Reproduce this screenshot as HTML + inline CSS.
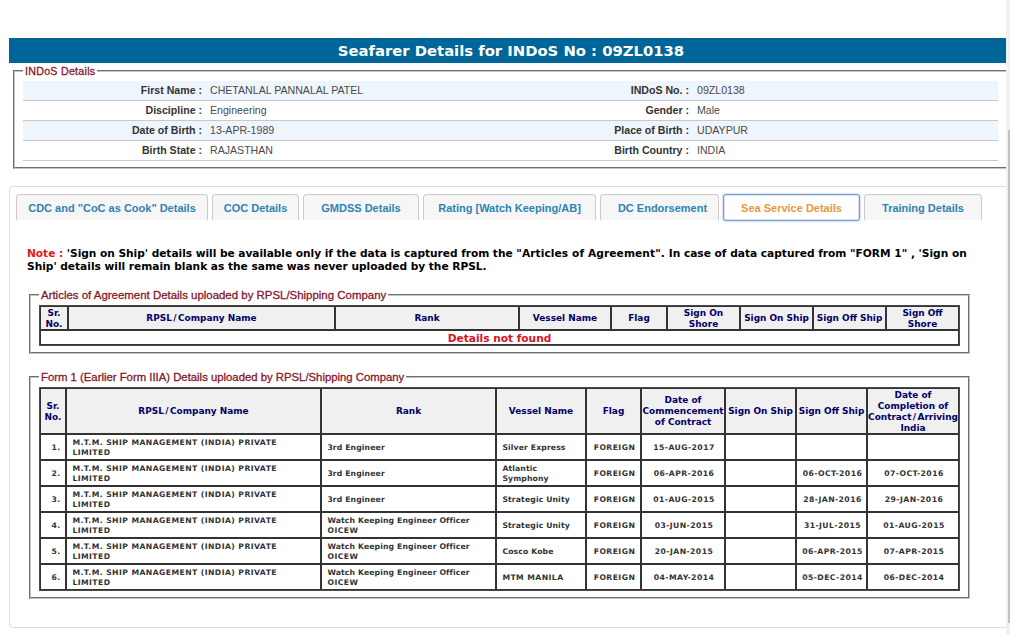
<!DOCTYPE html>
<html>
<head>
<meta charset="utf-8">
<title>Seafarer Details</title>
<style>
html,body{margin:0;padding:0;background:#fff;}
body{width:1010px;height:634px;overflow:hidden;position:relative;font-family:"Liberation Sans",sans-serif;}
.abs{position:absolute;}
.vb{font-family:"DejaVu Sans",sans-serif;font-weight:bold;}
#title{left:9px;top:38px;width:1004px;height:25px;background:#006699;color:#fff;text-align:center;font-size:14.8px;line-height:25px;}
/* groove frame */
.fs{position:absolute;box-sizing:border-box;border:1px solid;border-color:#6e6e6e #c4c4c4 #c4c4c4 #6e6e6e;}
.fs>i{position:absolute;left:0;top:0;right:0;bottom:0;border:1px solid;border-color:#c4c4c4 #6e6e6e #6e6e6e #c4c4c4;}
.lg{position:absolute;background:#fff;color:#84182b;-webkit-text-stroke:0.3px #84182b;white-space:nowrap;padding:0 2px;}
/* indos table */
#indos{left:23px;top:81px;width:975px;border-collapse:collapse;font-size:10.6px;}
#indos td{height:19px;padding:0;border-bottom:1px solid #c9c9c9;white-space:nowrap;line-height:19px;}
#indos tr.s td{background:#eef5fd;}
#indos td.l{text-align:right;font-weight:bold;color:#333;}
#indos td.v{color:#4a4a4a;padding-left:8px;}
/* tabs */
#tabs{left:9px;top:186px;width:1010px;height:440px;border:1px solid #ddd;border-radius:4px;}
.tab{position:absolute;top:194px;height:26px;box-sizing:border-box;border:1px solid #ccc;border-bottom:0;border-radius:4px 4px 0 0;background:#f6f6f6;color:#2e83b4;font-weight:bold;font-size:11px;line-height:27px;text-align:center;white-space:nowrap;}
.tab.act{height:27px;border:1px solid #7a9fd0;border-radius:3px;background:#fff;color:#e9983f;box-shadow:inset 0 0 0 1px #d6e1f0,0 0 2px #7a9fd0;}
/* data tables */
table.dt{position:absolute;border:1px solid #4a4a4a;border-spacing:0;border-collapse:separate;table-layout:fixed;}
table.dt th,table.dt td{border:1px solid #333;padding:0;overflow:hidden;}
table.dt th{background:#f0f0f0;color:#000066;font-size:8.95px;line-height:11px;text-align:center;font-family:"DejaVu Sans",sans-serif;font-weight:bold;}
table.dt td{color:#333;font-size:7.7px;letter-spacing:0.42px;line-height:10px;font-family:"DejaVu Sans",sans-serif;font-weight:bold;text-align:left;padding:3px 0 1px 5.4px;}
table.dt td.lc{letter-spacing:0.13px;}
table.dt td.s1{padding-top:3px;padding-bottom:1px;}
.d1{position:relative;top:1px;}
.sl{padding:0 1.4px;}
table.dt td.c{text-align:center;padding-left:2px;}
</style>
</head>
<body>
<div id="title" class="abs vb">Seafarer Details for INDoS No : 09ZL0138</div>

<div class="fs" style="left:13px;top:70px;width:996px;height:99px;"><i></i></div>
<div class="lg" style="left:23px;top:64px;font-size:10.7px;letter-spacing:0.25px;line-height:14px;">INDoS Details</div>

<table id="indos" class="abs">
<colgroup><col style="width:179px"><col style="width:308px"><col style="width:179px"><col style="width:309px"></colgroup>
<tr class="s"><td class="s1 l">First Name :</td><td class="s1 v">CHETANLAL PANNALAL PATEL</td><td class="s1 l">INDoS No. :</td><td class="s1 v">09ZL0138</td></tr>
<tr><td class="s1 l">Discipline :</td><td class="s1 v">Engineering</td><td class="s1 l">Gender :</td><td class="s1 v">Male</td></tr>
<tr class="s"><td class="s1 l">Date of Birth :</td><td class="s1 v">13-APR-1989</td><td class="s1 l">Place of Birth :</td><td class="s1 v">UDAYPUR</td></tr>
<tr><td class="s1 l">Birth State :</td><td class="s1 v">RAJASTHAN</td><td class="s1 l">Birth Country :</td><td class="s1 v">INDIA</td></tr>
</table>

<div id="tabs" class="abs"></div>
<div class="tab" style="left:16px;width:192px;">CDC and "CoC as Cook" Details</div>
<div class="tab" style="left:212px;width:87px;">COC Details</div>
<div class="tab" style="left:303px;width:116px;">GMDSS Details</div>
<div class="tab" style="left:423px;width:173px;">Rating [Watch Keeping/AB]</div>
<div class="tab" style="left:600px;width:119px;padding-left:6px;">DC Endorsement</div>
<div class="tab act" style="left:723px;width:137px;">Sea Service Details</div>
<div class="tab" style="left:864px;width:118px;">Training Details</div>

<div id="note" class="abs vb" style="left:27px;top:247px;font-size:10.64px;line-height:13px;color:#000;white-space:nowrap;"><span style="letter-spacing:-0.04px"><span style="color:#e8121a">Note :</span> 'Sign on Ship' details will be available only if the data is captured from the </span><span style="letter-spacing:0.09px">"Articles of Agreement". </span><span style="letter-spacing:-0.01px">In case of data captured from "FORM 1" , 'Sign on</span><br><span style="letter-spacing:-0.022px">Ship' details will remain blank as the same was never uploaded by the RPSL.</span></div>

<!-- fieldset 1 -->
<div class="fs" style="left:29px;top:294px;width:941px;height:60px;"><i></i></div>
<div class="lg" style="left:39px;top:288px;font-size:11.45px;line-height:14px;">Articles of Agreement Details uploaded by RPSL/Shipping Company</div>
<table class="dt" style="left:39px;top:305px;width:921px;">
<colgroup><col style="width:28px"><col style="width:267px"><col style="width:184px"><col style="width:92px"><col style="width:56px"><col style="width:73px"><col style="width:73px"><col style="width:73px"><col style="width:73px"></colgroup>
<tr style="height:24px"><th><div class="d1">Sr.<br>No.</div></th><th>RPSL<span class="sl">/</span>Company Name</th><th>Rank</th><th>Vessel Name</th><th>Flag</th><th><div class="d1">Sign On<br>Shore</div></th><th>Sign On Ship</th><th>Sign Off Ship</th><th><div class="d1">Sign Off<br>Shore</div></th></tr>
<tr style="height:15px"><td colspan="9" class="c" style="padding:1px 0 0 0;font-size:10.6px;letter-spacing:0;line-height:12px;color:#d8121c;">Details not found</td></tr>
</table>

<!-- fieldset 2 -->
<div class="fs" style="left:29px;top:376px;width:941px;height:223px;"><i></i></div>
<div class="lg" style="left:39px;top:370px;font-size:11.34px;line-height:14px;">Form 1 (Earlier Form IIIA) Details uploaded by RPSL/Shipping Company</div>
<table class="dt" style="left:39px;top:387px;width:921px;">
<colgroup><col style="width:26px"><col style="width:255px"><col style="width:175px"><col style="width:90px"><col style="width:55px"><col style="width:84px"><col style="width:71px"><col style="width:71px"><col style="width:92px"></colgroup>
<tr style="height:46px"><th><div class="d1">Sr.<br>No.</div></th><th>RPSL<span class="sl">/</span>Company Name</th><th>Rank</th><th>Vessel Name</th><th>Flag</th><th>Date of<br>Commencement<br>of Contract</th><th>Sign On Ship</th><th>Sign Off Ship</th><th><div class="d1">Date of<br>Completion of<br>Contract<span class="sl">/</span>Arriving<br>India</div></th></tr>
<tr style="height:26px"><td class="s1 c" style="padding-left:6px">1.</td><td>M.T.M. SHIP MANAGEMENT (INDIA) PRIVATE<br>LIMITED</td><td class="s1 lc">3rd Engineer</td><td class="s1 lc">Silver Express</td><td class="s1 c">FOREIGN</td><td class="s1 c">15-AUG-2017</td><td class="s1 c"></td><td class="s1 c"></td><td class="s1 c"></td></tr>
<tr style="height:26px"><td class="s1 c" style="padding-left:6px">2.</td><td>M.T.M. SHIP MANAGEMENT (INDIA) PRIVATE<br>LIMITED</td><td class="s1 lc">3rd Engineer</td><td class="lc">Atlantic<br>Symphony</td><td class="s1 c">FOREIGN</td><td class="s1 c">06-APR-2016</td><td class="s1 c"></td><td class="s1 c">06-OCT-2016</td><td class="s1 c">07-OCT-2016</td></tr>
<tr style="height:26px"><td class="s1 c" style="padding-left:6px">3.</td><td>M.T.M. SHIP MANAGEMENT (INDIA) PRIVATE<br>LIMITED</td><td class="s1 lc">3rd Engineer</td><td class="s1 lc">Strategic Unity</td><td class="s1 c">FOREIGN</td><td class="s1 c">01-AUG-2015</td><td class="s1 c"></td><td class="s1 c">28-JAN-2016</td><td class="s1 c">29-JAN-2016</td></tr>
<tr style="height:26px"><td class="s1 c" style="padding-left:6px">4.</td><td>M.T.M. SHIP MANAGEMENT (INDIA) PRIVATE<br>LIMITED</td><td class="lc">Watch Keeping Engineer Officer<br><span style="letter-spacing:0.47px">OICEW</span></td><td class="s1 lc">Strategic Unity</td><td class="s1 c">FOREIGN</td><td class="s1 c">03-JUN-2015</td><td class="s1 c"></td><td class="s1 c">31-JUL-2015</td><td class="s1 c">01-AUG-2015</td></tr>
<tr style="height:26px"><td class="s1 c" style="padding-left:6px">5.</td><td>M.T.M. SHIP MANAGEMENT (INDIA) PRIVATE<br>LIMITED</td><td class="lc">Watch Keeping Engineer Officer<br><span style="letter-spacing:0.47px">OICEW</span></td><td class="s1 lc">Cosco Kobe</td><td class="s1 c">FOREIGN</td><td class="s1 c">20-JAN-2015</td><td class="s1 c"></td><td class="s1 c">06-APR-2015</td><td class="s1 c">07-APR-2015</td></tr>
<tr style="height:26px"><td class="s1 c" style="padding-left:6px">6.</td><td>M.T.M. SHIP MANAGEMENT (INDIA) PRIVATE<br>LIMITED</td><td class="lc">Watch Keeping Engineer Officer<br><span style="letter-spacing:0.47px">OICEW</span></td><td class="s1">MTM MANILA</td><td class="s1 c">FOREIGN</td><td class="s1 c">04-MAY-2014</td><td class="s1 c"></td><td class="s1 c">05-DEC-2014</td><td class="s1 c">06-DEC-2014</td></tr>
</table>

<!-- scrollbar -->
<div class="abs" style="left:1006px;top:0;width:4px;height:634px;background:#f1f1f1;"></div>
<div class="abs" style="left:1008px;top:130px;width:2px;height:493px;background:#c1c1c1;"></div>
</body>
</html>
